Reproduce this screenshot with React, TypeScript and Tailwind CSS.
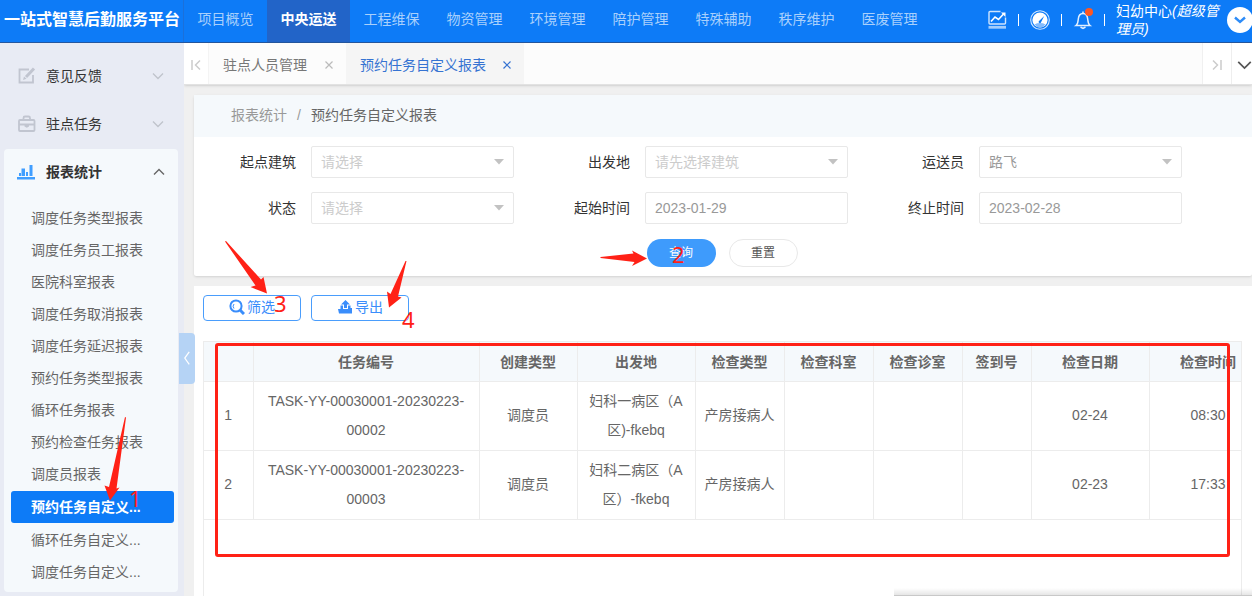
import React, { useState } from "react";

const NAV = [
  "项目概览",
  "中央运送",
  "工程维保",
  "物资管理",
  "环境管理",
  "陪护管理",
  "特殊辅助",
  "秩序维护",
  "医废管理",
];

const REPORTS = [
  "调度任务类型报表",
  "调度任务员工报表",
  "医院科室报表",
  "调度任务取消报表",
  "调度任务延迟报表",
  "预约任务类型报表",
  "循环任务报表",
  "预约检查任务报表",
  "调度员报表",
  "预约任务自定义...",
  "循环任务自定义...",
  "调度任务自定义...",
];

const COLUMNS = [
  { title: "", width: "w-[49px]" },
  { title: "任务编号", width: "w-[226px]" },
  { title: "创建类型", width: "w-[98px]" },
  { title: "出发地", width: "w-[118px]" },
  { title: "检查类型", width: "w-[89px]" },
  { title: "检查科室", width: "w-[89px]" },
  { title: "检查诊室", width: "w-[89px]" },
  { title: "签到号", width: "w-[69px]" },
  { title: "检查日期", width: "w-[118px]" },
  { title: "检查时间", width: "w-[118px]" },
];

const ROWS = [
  ["1", "TASK-YY-00030001-20230223-00002", "调度员", "妇科一病区（A区)-fkebq", "产房接病人", "", "", "", "02-24", "08:30"],
  ["2", "TASK-YY-00030001-20230223-00003", "调度员", "妇科二病区（A区）-fkebq", "产房接病人", "", "", "", "02-23", "17:33"],
];

function Chevron({ dir, className }: { dir: "up" | "down" | "left"; className: string }) {
  const d = { up: "M1 6.5 6 1.5l5 5", down: "M1 1.5l5 5 5-5", left: "M7 1 2 8l5 7" }[dir];
  return (
    <svg
      viewBox={dir === "left" ? "0 0 9 16" : "0 0 12 8"}
      className={className}
      fill="none"
      stroke="currentColor"
      strokeWidth="1.4"
    >
      <path d={d} />
    </svg>
  );
}

function CloseIcon() {
  return (
    <svg viewBox="0 0 8 8" className="size-2" fill="none" stroke="currentColor" strokeWidth="1.2">
      <path d="M.5.5l7 7M7.5.5l-7 7" />
    </svg>
  );
}

function Header() {
  return (
    <header className="flex h-[43px] shrink-0 border-b border-[#24579f] bg-[#0d7bf7] text-white">
      <h1 className="flex h-[39px] w-[183px] shrink-0 items-center pl-1 text-base font-bold whitespace-nowrap">
        一站式智慧后勤服务平台
      </h1>
      <nav className="flex flex-1 border-l border-[#1b70da]">
        {NAV.map((item) => (
          <a
            key={item}
            href="#"
            className={
              item === "中央运送"
                ? "flex w-[83px] items-center justify-center bg-[#2264c8] pb-1 font-bold whitespace-nowrap"
                : "flex w-[83px] items-center justify-center pb-1 whitespace-nowrap text-[#a9d0fc]"
            }
          >
            {item}
          </a>
        ))}
      </nav>
      <div className="flex h-10 shrink-0 items-center gap-[11px]">
        <button aria-label="统计">
          <svg viewBox="0 0 20 20" className="size-5" fill="none" stroke="#cfe5fe" strokeWidth="1.4">
            <path d="M13.500 1.500H3a1 1 0 0 0-1 1V13a1 1 0 0 0 1 1h14.500a1 1 0 0 0 1-1V7.500" />
            <path d="M1.500 17.300h17.500" stroke="#a3cdfc" strokeWidth="2.800" />
            <path d="M4 11.500l4-4.500 3.500 2.500 5-5.500" stroke="#fff" strokeWidth="1.600" />
            <path d="M14 2.500h4.500V7z" fill="#fff" stroke="none" />
          </svg>
        </button>
        <span className="h-3 w-px bg-white" />
        <button aria-label="仪表盘">
          <svg viewBox="0 0 20 20" className="size-5">
            <circle cx="10" cy="10" r="9.300" fill="none" stroke="#d5e8fe" strokeWidth="1.100" />
            <circle cx="10" cy="10" r="7.600" fill="#fff" />
            <path d="M4.500 14.500a7.500 4.500 0 0 1 11 0A7.600 7.600 0 0 1 10 17.600a7.600 7.600 0 0 1-5.500-3.100z" fill="#86bcfb" />
            <path d="M8.800 11.200l5.400-5.200-3.400 6.800a1.300 1.300 0 0 1-2-1.600z" fill="#0d7bf7" />
          </svg>
        </button>
        <span className="h-3 w-px bg-white" />
        <button aria-label="消息" className="relative">
          <svg viewBox="0 0 20 20" className="size-5" fill="none" stroke="#e3f0ff" strokeWidth="1.500">
            <path d="M3 15.500c2-1.500 2-3.500 2.300-6.500C5.600 5.500 7.500 3.500 10 3.500s4.400 2 4.700 5.500c.3 3 .3 5 2.300 6.500z" />
            <path d="M10 3.500v-2M7.500 17l2.500 1.300 2.500-1.300" />
          </svg>
          <span className="absolute -top-0.5 right-0 size-2 rounded-full bg-[#ff5722]" />
        </button>
        <span className="h-3 w-px bg-white" />
        <p className="w-[104px] leading-[18px]">
          妇幼中心<i>(超级管理员)</i>
        </p>
        <button
          aria-label="展开菜单"
          className="-mr-px -ml-1 flex size-[26px] items-center justify-center rounded-full bg-white text-[#2d8cf8]"
        >
          <svg viewBox="0 0 12 8" className="w-3" fill="none" stroke="currentColor" strokeWidth="2.400">
            <path d="M1 1.500l5 4.500 5-4.500" />
          </svg>
        </button>
      </div>
    </header>
  );
}

function Sidebar() {
  return (
    <aside className="relative w-[184px] shrink-0 bg-[#e8ebf4] px-1 pt-[9px] text-[#333]">
      <button className="flex h-12 w-full items-center pr-5 pl-[14px]">
        <svg viewBox="0 0 18 18" className="size-[18px] text-[#c1c5d0]" fill="none" stroke="currentColor" strokeWidth="1.800">
          <path d="M11 2.500H1.500v13h13.500V8" />
          <path d="M8 10l8-8.500" strokeWidth="3" />
          <path d="M5 13l1-3.500 2.500 2.300z" fill="currentColor" stroke="none" />
        </svg>
        <span className="ml-[10px] flex-1 text-left">意见反馈</span>
        <Chevron dir="down" className="-mr-1 w-3 text-[#c0c4cc]" />
      </button>
      <button className="flex h-12 w-full items-center pr-5 pl-[14px]">
        <svg viewBox="0 0 18 18" className="size-[18px] text-[#c1c5d0]" fill="none" stroke="currentColor" strokeWidth="1.800">
          <rect x="1" y="5" width="15.500" height="11" rx="1" />
          <path d="M5.500 5V3a1.500 1.500 0 0 1 1.500-1.500h3.500A1.500 1.500 0 0 1 12 3v2M1 9.500h15.500" />
          <path d="M6.500 9.500h4.500v2l-2.200 1.200-2.300-1.200z" fill="currentColor" stroke="none" />
        </svg>
        <span className="ml-[10px] flex-1 text-left">驻点任务</span>
        <Chevron dir="down" className="-mr-1 w-3 text-[#c0c4cc]" />
      </button>
      <section className="mt-px w-[174px] rounded bg-[#f5f9fc] pb-1">
        <button className="flex h-[51px] w-full items-center px-[13px] pb-1.5">
          <svg viewBox="0 0 18 16" className="w-[18px] text-[#409eff]" fill="currentColor">
            <path d="M0 13h18v2.500H0zM2 9h2v3H2zM4.500 4.500H8V12H4.500zM9 8h2v4H9zM12.500 1h3v11h-3z" />
          </svg>
          <span className="ml-[11px] flex-1 text-left font-bold">报表统计</span>
          <Chevron dir="up" className="w-3 text-[#666]" />
        </button>
        <ul className="pt-0.5 pr-1 pl-[7px] text-[#666]">
          {REPORTS.map((name, i) => (
            <li key={name}>
              <a
                href="#"
                className={
                  i === 9
                    ? "my-px flex h-8 items-center rounded-[3px] bg-[#0d7bf7] pl-5 font-bold whitespace-nowrap text-white"
                    : "flex h-8 items-center pl-5 whitespace-nowrap"
                }
              >
                {name}
              </a>
            </li>
          ))}
        </ul>
      </section>
      <button
        aria-label="收起侧栏"
        className="absolute top-[290px] left-[179px] z-10 flex h-[51px] w-4 items-center justify-center rounded-r bg-[#b5d3f5] text-white"
      >
        <Chevron dir="left" className="w-2" />
      </button>
    </aside>
  );
}

function TabBar() {
  return (
    <div className="flex h-[42px] shrink-0 border-b border-[#e2e2e2] bg-[#fcfcfc] text-[#777] shadow-sm">
      <button aria-label="第一页" className="flex w-6 items-center justify-center bg-white pt-0.5 text-[#ccc]">
        <svg viewBox="0 0 10 12" className="w-[10px]" fill="none" stroke="currentColor" strokeWidth="1.500">
          <path d="M1 1v10M9 1.500L4.500 6 9 10.500" />
        </svg>
      </button>
      <div className="flex w-[138px] items-center justify-between border-l border-[#f4f4f4] pt-0.5 pr-[13px] pl-[14px]">
        <a href="#" className="whitespace-nowrap">驻点人员管理</a>
        <button aria-label="关闭驻点人员管理" className="text-[#bbb]">
          <CloseIcon />
        </button>
      </div>
      <div className="flex w-[178px] items-center justify-between bg-[#f5f5f5] pt-0.5 pr-[13px] pl-[14px] text-[#3573d2]">
        <a href="#" className="whitespace-nowrap">预约任务自定义报表</a>
        <button aria-label="关闭预约任务自定义报表">
          <CloseIcon />
        </button>
      </div>
      <span className="flex-1" />
      <button
        aria-label="最后一页"
        className="flex w-[29px] items-center justify-center border-l border-[#f0f0f0] bg-white pt-0.5 text-[#ccc]"
      >
        <svg viewBox="0 0 10 12" className="w-[10px]" fill="none" stroke="currentColor" strokeWidth="1.500">
          <path d="M9 1v10M1 1.500L5.500 6 1 10.500" />
        </svg>
      </button>
      <button
        aria-label="更多标签"
        className="flex w-[21px] items-center justify-end border-l border-[#eee] bg-white pt-0.5 text-[#555]"
      >
        <Chevron dir="down" className="w-[15px]" />
      </button>
    </div>
  );
}

function Field({ id, label, children }: { id: string; label: string; children: React.ReactNode }) {
  return (
    <div className="flex h-8 items-center gap-[15px]">
      <label htmlFor={id} className="w-[102px] shrink-0 text-right text-[#333]">
        {label}
      </label>
      <div className="relative min-w-0 flex-1">{children}</div>
    </div>
  );
}

function SelectField({ id, label, text, chosen }: { id: string; label: string; text: string; chosen?: boolean }) {
  return (
    <Field id={id} label={label}>
      <select
        id={id}
        className={
          chosen
            ? "block h-8 w-full appearance-none rounded-xs border border-[#e8e8e8] bg-white pr-7 pl-[9px] text-[#999]"
            : "block h-8 w-full appearance-none rounded-xs border border-[#e8e8e8] bg-white pr-7 pl-[9px] text-[#ccc]"
        }
      >
        <option>{text}</option>
      </select>
      <svg
        viewBox="0 0 10 6"
        className="pointer-events-none absolute top-[13px] right-[10px] w-[10px] text-[#c2c2c2]"
        fill="currentColor"
      >
        <path d="M0 0h10L5 5.500z" />
      </svg>
    </Field>
  );
}

function DateField({ id, label, initial }: { id: string; label: string; initial: string }) {
  const [value, setValue] = useState(initial);
  return (
    <Field id={id} label={label}>
      <input
        id={id}
        value={value}
        onChange={(e) => setValue(e.target.value)}
        className="block h-8 w-full rounded-xs border border-[#e8e8e8] bg-white px-[9px] text-[#999]"
      />
    </Field>
  );
}

function SearchCard() {
  return (
    <section className="shrink-0 rounded-xs bg-white pb-[9px] shadow-sm">
      <div className="flex h-[42px] items-center gap-[10px] bg-[#f5f9fc] pb-0.5 pl-[37px] text-[#666]">
        <a href="#" className="text-[#999]">报表统计</a>
        <span className="text-[#999]">/</span>
        <span>预约任务自定义报表</span>
      </div>
      <form onSubmit={(e) => e.preventDefault()}>
        <div className="grid grid-cols-3 gap-[14px] pt-[9px] pr-[70px]">
          <SelectField id="building" label="起点建筑" text="请选择" />
          <SelectField id="from" label="出发地" text="请先选择建筑" />
          <SelectField id="worker" label="运送员" text="路飞" chosen />
          <SelectField id="status" label="状态" text="请选择" />
          <DateField id="start" label="起始时间" initial="2023-01-29" />
          <DateField id="end" label="终止时间" initial="2023-02-28" />
        </div>
        <div className="mt-[15px] flex justify-center gap-[13px] pr-0.5 text-xs">
          <button type="submit" className="h-7 w-[69px] rounded-full bg-[#3e9bfc] text-white">
            查询
          </button>
          <button type="reset" className="h-7 w-[69px] rounded-full border border-[#e8e8e8] text-[#555]">
            重置
          </button>
        </div>
      </form>
    </section>
  );
}

function ResultCard() {
  return (
    <section className="flex min-h-0 flex-1 flex-col bg-white pt-[9px] pr-[10px] pl-[9px]">
      <div className="flex gap-[10px] text-[#3a8dfb]">
        <button className="flex h-[26px] w-[98px] items-center justify-center gap-0.5 rounded border border-[#4a9dfc] pb-0.5">
          <svg viewBox="0 0 16 16" className="size-4" fill="none" stroke="currentColor">
            <circle cx="7" cy="7" r="5.600" strokeWidth="2" />
            <path d="M11 11l4 4" strokeWidth="3" />
            <path d="M5 9.500a3.500 3.500 0 0 1 0-4.500" />
          </svg>
          筛选
        </button>
        <button className="flex h-[26px] w-[98px] items-center justify-center gap-0.5 rounded border border-[#4a9dfc] pb-0.5">
          <svg viewBox="0 0 16 16" className="size-4" fill="currentColor">
            <path d="M8.500 1L13 5.500h-3V9H7V5.500H4z" />
            <path d="M3.500 6.500H6V10h5V6.500h2.500V9h1.500v5.500H2L1 10h2.500z" />
          </svg>
          导出
        </button>
      </div>
      <div className="mt-5 min-h-0 flex-1 overflow-hidden border border-b-0 border-[#ececec]">
        <table className="w-[1063px] table-fixed border-collapse text-center text-[#666]">
          <thead>
            <tr className="h-[39px] border-b border-[#ececec] bg-[#f5f9fc]">
              {COLUMNS.map((col, i) => (
                <th key={i} className={`${col.width} border-r border-[#ececec] pt-px font-bold whitespace-nowrap`}>
                  {col.title}
                </th>
              ))}
            </tr>
          </thead>
          <tbody>
            {ROWS.map((row) => (
              <tr key={row[0]} className="h-[69px] border-b border-[#ececec]">
                {row.map((cell, i) => (
                  <td key={i} className="border-r border-[#ececec] px-2 leading-[29px]">
                    {cell}
                  </td>
                ))}
              </tr>
            ))}
          </tbody>
        </table>
      </div>
    </section>
  );
}

// Red guide marks drawn over the page: steps 1-4 and the result frame
function Guide() {
  return (
    <div className="pointer-events-none absolute inset-0 z-20 font-['Noto_Sans'] text-[22px] leading-none text-[#ff2116]">
      <svg width="700" height="520" viewBox="0 0 700 520" className="absolute top-0 left-0" fill="currentColor">
        <path d="M126 417.500L116.500 488.500L119.500 487.500L110 500.500L104.500 485.500L109 487L125 417z" />
        <path d="M600.500 257L633.500 253.500L632 250.500L647 258.500L632 266L634.500 262L600.500 258z" />
        <path d="M225 241.500L226 241L261 279.500L263.500 277L267 293.500L250.500 287L255.500 285.500z" />
        <path d="M406.500 261L398 296.500L401.500 297.500L389 307.500L387 291.500L390.500 294L405.500 261z" />
      </svg>
      <span className="absolute top-[487px] left-[129px]">1</span>
      <span className="absolute top-[243px] left-[672px]">2</span>
      <span className="absolute top-[292px] left-[274px]">3</span>
      <span className="absolute top-[308px] left-[402px]">4</span>
      <div className="absolute top-[343px] right-[22px] left-[215px] h-[214px] rounded-[3px] border-3 border-[#ff2116]" />
    </div>
  );
}

export default function App() {
  return (
    <div className="relative flex h-screen flex-col overflow-hidden bg-[#f0f0f0] font-['Liberation_Sans','Noto_Sans_CJK_SC',sans-serif] text-sm">
      <Header />
      <div className="flex min-h-0 flex-1">
        <Sidebar />
        <main className="flex min-w-0 flex-1 flex-col">
          <TabBar />
          <div className="flex min-h-0 flex-1 flex-col gap-[10px] pt-[10px] pl-[10px]">
            <SearchCard />
            <ResultCard />
          </div>
        </main>
      </div>
      <Guide />
      <div className="absolute right-0 bottom-0 h-2 w-[358px] border-b border-[#c8c8c8] bg-linear-to-b from-transparent to-black/10" />
    </div>
  );
}
